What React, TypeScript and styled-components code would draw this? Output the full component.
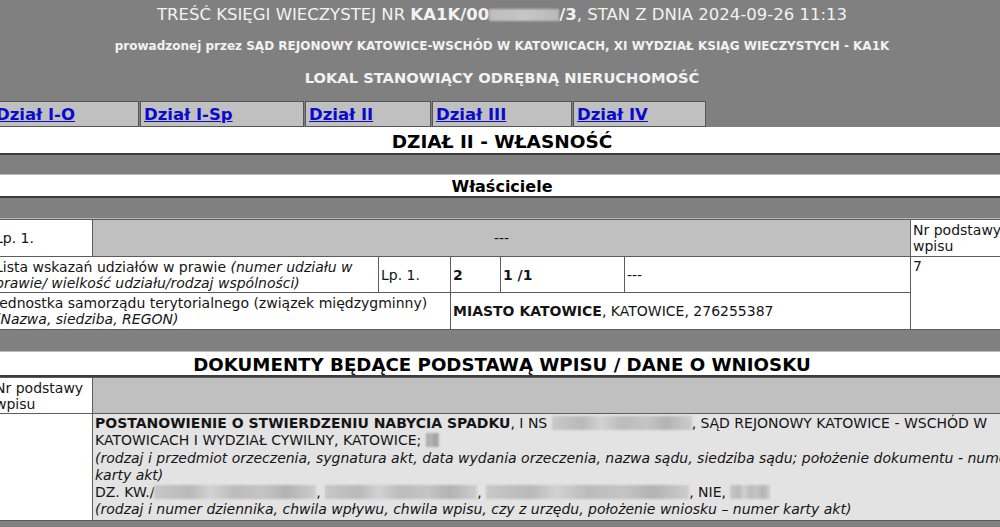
import styled, { createGlobalStyle } from "styled-components";

const GlobalStyle = createGlobalStyle`
  html, body {
    margin: 0;
    padding: 0;
    background: #ffffff;
    overflow: hidden;
  }
  body {
    font-family: "DejaVu Sans", Verdana, sans-serif;
    color: #151515;
  }
`;

const Page = styled.div`
  width: 1020px;
  margin-left: -8px;
`;

const Header = styled.div`
  background: #808080;
  color: #f2f2f2;
  display: flex;
  flex-direction: column;
  align-items: center;
`;

const HeaderLine = styled.div<{ $h: number; $size: number; $bold?: boolean }>`
  height: ${(p) => p.$h}px;
  display: flex;
  align-items: center;
  justify-content: center;
  font-size: ${(p) => p.$size}px;
  font-weight: ${(p) => (p.$bold ? "bold" : "normal")};
  white-space: nowrap;
`;

const TabBar = styled.div`
  align-self: flex-start;
  display: flex;
  gap: 1px;
  height: 26px;
  margin-top: 8px;
`;

const Tab = styled.div<{ $w: number }>`
  width: ${(p) => p.$w}px;
  box-sizing: border-box;
  background: #c0c0c0;
  border: 1px solid #555;
  padding: 0 3px;
  display: flex;
  align-items: center;
`;

const TabLink = styled.a`
  color: #0a0acc;
  font-weight: bold;
  font-size: 16.5px;
  text-decoration: underline;
  cursor: pointer;
`;

const SectionTitle = styled.div<{ $h: number; $size: number }>`
  height: ${(p) => p.$h}px;
  box-sizing: border-box;
  padding-top: 2px;
  background: #fff;
  display: flex;
  align-items: center;
  justify-content: center;
  font-weight: bold;
  font-size: ${(p) => p.$size}px;
  color: #000;
  border-bottom: 2px solid #3c3c3c;
`;

const Band = styled.div<{ $h: number }>`
  height: ${(p) => p.$h}px;
  box-sizing: border-box;
  background: #808080;
  border-bottom: 1px solid #b8b8b8;
`;

const Table = styled.table`
  width: 1020px;
  border-collapse: collapse;
  table-layout: fixed;
  font-size: 14px;
`;

const Row = styled.tr<{ $h: number }>`
  height: ${(p) => p.$h}px;
`;

const Cell = styled.td<{ $bg?: string; $center?: boolean; $top?: boolean; $lh?: number }>`
  border: 1px solid #5c5c5c;
  padding: 1px 2px;
  background: ${(p) => p.$bg || "#fff"};
  text-align: ${(p) => (p.$center ? "center" : "left")};
  vertical-align: ${(p) => (p.$top ? "top" : "middle")};
  line-height: ${(p) => p.$lh || 16}px;
  overflow: hidden;
`;

const DocText = styled.div`
  white-space: nowrap;
`;

const Hint = styled.i`
  font-style: italic;
`;

const Redact = styled.span<{ $w: number; $dark?: boolean }>`
  display: inline-block;
  width: ${(p) => p.$w}px;
  height: 14px;
  vertical-align: -2px;
  background: ${(p) =>
    p.$dark
      ? "linear-gradient(90deg, #a9a9a9 0%, #b6b6b6 40%, #9f9f9f 70%, #b0b0b0 100%)"
      : "linear-gradient(90deg, #c8c8c8 0%, #b9b9b9 22%, #d2d2d2 35%, #bcbcbc 50%, #c4c4c4 68%, #b3b3b3 82%, #cdcdcd 100%)"};
  filter: blur(1px);
`;

const TitleRedact = styled(Redact)`
  height: 12px;
  background: linear-gradient(90deg, #bdbdbd 0%, #c6c6c6 50%, #b9b9b9 100%);
`;

const tabs = [
  { label: "Dział I-O", w: 147 },
  { label: "Dział I-Sp", w: 164 },
  { label: "Dział II", w: 126 },
  { label: "Dział III", w: 140 },
  { label: "Dział IV", w: 133 },
];

export default function App() {
  return (
    <Page>
      <GlobalStyle />
      <Header>
        <HeaderLine $h={29} $size={16.5}>
          TREŚĆ KSIĘGI WIECZYSTEJ NR&nbsp;<b>KA1K/00</b>
          <TitleRedact $w={70} />
          <b>/3</b>, STAN Z DNIA 2024-09-26 11:13
        </HeaderLine>
        <HeaderLine $h={33} $size={12} $bold>
          prowadzonej przez SĄD REJONOWY KATOWICE-WSCHÓD W KATOWICACH, XI WYDZIAŁ KSIĄG WIECZYSTYCH - KA1K
        </HeaderLine>
        <HeaderLine $h={31} $size={14.7} $bold>
          LOKAL STANOWIĄCY ODRĘBNĄ NIERUCHOMOŚĆ
        </HeaderLine>
        <TabBar>
          {tabs.map((t) => (
            <Tab key={t.label} $w={t.w}>
              <TabLink>{t.label}</TabLink>
            </Tab>
          ))}
        </TabBar>
      </Header>

      <SectionTitle $h={28} $size={18.5}>
        DZIAŁ II - WŁASNOŚĆ
      </SectionTitle>
      <Band $h={20} />
      <SectionTitle $h={23} $size={16}>
        Właściciele
      </SectionTitle>
      <Band $h={21} />

      <Table>
        <colgroup>
          <col style={{ width: 100 }} />
          <col style={{ width: 286 }} />
          <col style={{ width: 72 }} />
          <col style={{ width: 50 }} />
          <col style={{ width: 124 }} />
          <col style={{ width: 286 }} />
          <col style={{ width: 102 }} />
        </colgroup>
        <tbody>
          <Row $h={37}>
            <Cell>Lp. 1.</Cell>
            <Cell colSpan={5} $bg="#c0c0c0" $center>
              ---
            </Cell>
            <Cell>Nr podstawy wpisu</Cell>
          </Row>
          <Row $h={36}>
            <Cell colSpan={2}>
              Lista wskazań udziałów w prawie <Hint>(numer udziału w prawie/ wielkość udziału/rodzaj wspólności)</Hint>
            </Cell>
            <Cell>Lp. 1.</Cell>
            <Cell>
              <b>2</b>
            </Cell>
            <Cell>
              <b>1 /1</b>
            </Cell>
            <Cell>---</Cell>
            <Cell rowSpan={2} $top>
              7
            </Cell>
          </Row>
          <Row $h={37}>
            <Cell colSpan={3}>
              Jednostka samorządu terytorialnego (związek międzygminny) <Hint>(Nazwa, siedziba, REGON)</Hint>
            </Cell>
            <Cell colSpan={3}>
              <b>MIASTO KATOWICE</b>, KATOWICE, 276255387
            </Cell>
          </Row>
        </tbody>
      </Table>

      <Band $h={22} />
      <SectionTitle $h={25} $size={18.2}>
        DOKUMENTY BĘDĄCE PODSTAWĄ WPISU / DANE O WNIOSKU
      </SectionTitle>

      <Table>
        <colgroup>
          <col style={{ width: 100 }} />
          <col style={{ width: 920 }} />
        </colgroup>
        <tbody>
          <Row $h={36}>
            <Cell>Nr podstawy wpisu</Cell>
            <Cell $bg="#c0c0c0" />
          </Row>
          <Row $h={107}>
            <Cell />
            <Cell $bg="#e3e3e3" $top $lh={17.3}>
              <DocText>
                <b>POSTANOWIENIE O STWIERDZENIU NABYCIA SPADKU</b>, I NS <Redact $w={140} />, SĄD REJONOWY KATOWICE - WSCHÓD W
              </DocText>
              <DocText>
                KATOWICACH I WYDZIAŁ CYWILNY, KATOWICE; <Redact $w={13} $dark />
              </DocText>
              <DocText>
                <Hint>
                  (rodzaj i przedmiot orzeczenia, sygnatura akt, data wydania orzeczenia, nazwa sądu, siedziba sądu; położenie dokumentu - numer
                </Hint>
              </DocText>
              <DocText>
                <Hint>karty akt)</Hint>
              </DocText>
              <DocText>
                DZ. KW./
                <Redact $w={162} />, <Redact $w={152} />, <Redact $w={203} />, NIE, <Redact $w={40} />
              </DocText>
              <DocText>
                <Hint>
                  (rodzaj i numer dziennika, chwila wpływu, chwila wpisu, czy z urzędu, położenie wniosku – numer karty akt)
                </Hint>
              </DocText>
            </Cell>
          </Row>
        </tbody>
      </Table>
      <Band $h={20} />
    </Page>
  );
}
